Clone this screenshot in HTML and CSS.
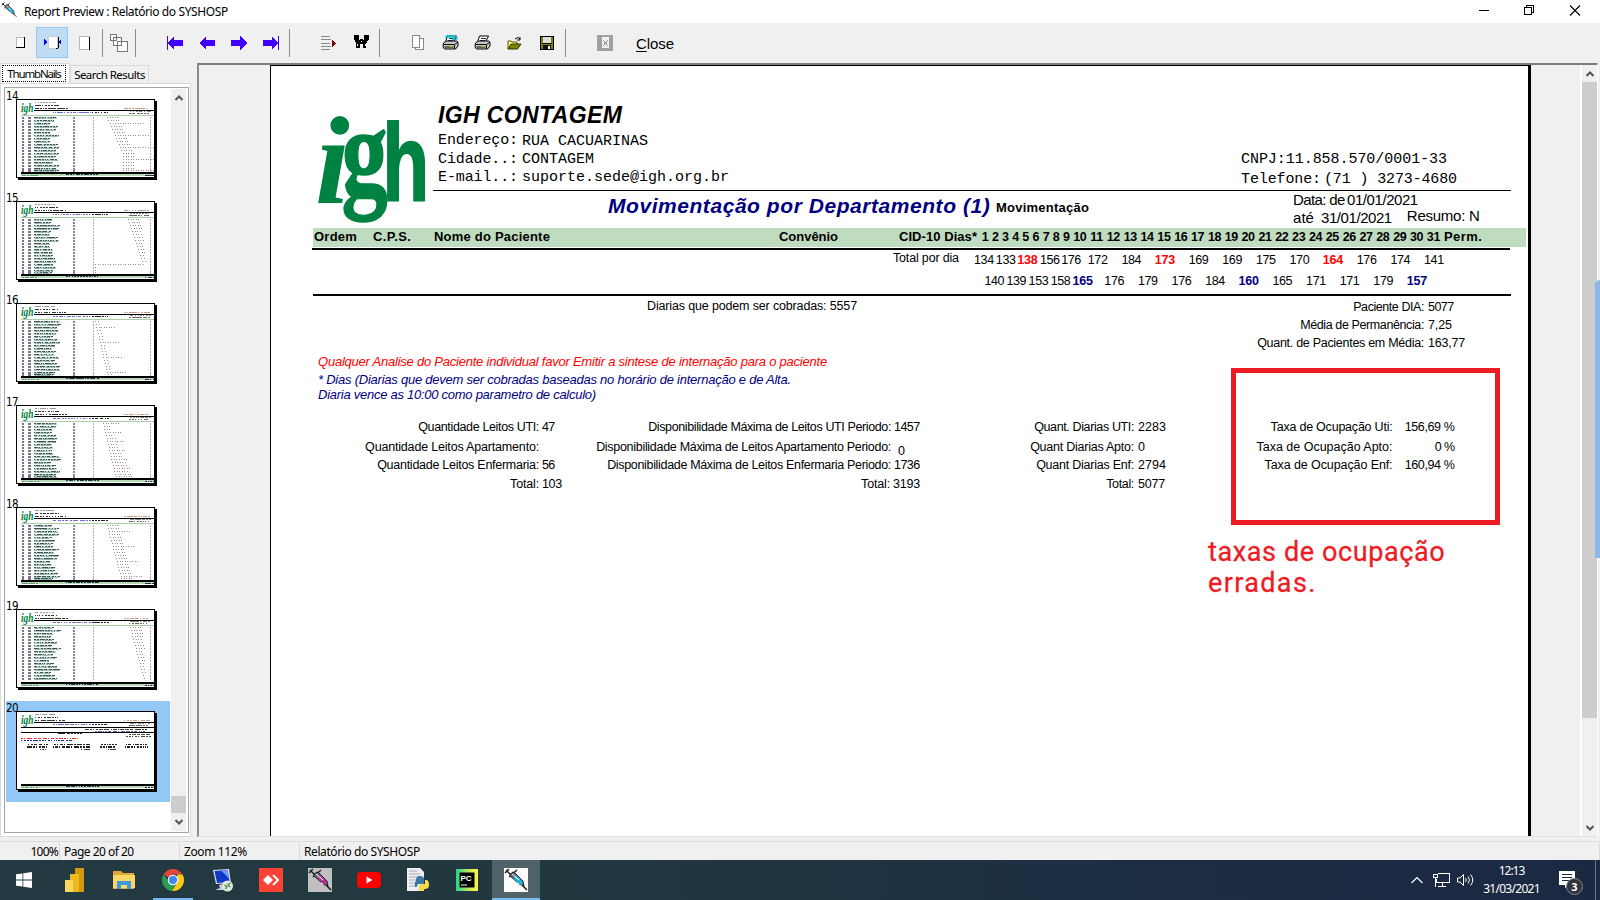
FILE: index.html
```html
<!DOCTYPE html>
<html lang="pt-BR">
<head>
<meta charset="utf-8">
<title>Report Preview : Relatório do SYSHOSP</title>
<link rel="stylesheet" href="styles.css">
</head>
<body>
<svg class="defs" width="0" height="0">
  <symbol id="syringe" viewBox="0 0 24 24">
    <path d="M2 2l5 5M1 5l4-4M5 9l8-7M8 4l4 3" stroke="#222" stroke-width="1.5" fill="none"/>
    <path d="M6 6l4-2 9 9 1 5-5-2-9-8z" fill="#667" stroke="#111" stroke-width=".8"/>
    <path class="fluid" d="M10 9l3-1 5 5 1 4-4-1-5-5z"/>
    <path d="M8 6l7 6M13 15l2 1" stroke="#fff" stroke-width="1"/>
    <path d="M18 17l5 5" stroke="#111" stroke-width="1.4"/>
  </symbol>
  <symbol id="printer" viewBox="0 0 16 16">
    <path d="M5 1h9l-3 6H3z" fill="#fff" stroke="#000"/>
    <path d="M6.500 3.500h5M5.500 5.500h5" stroke="#000" stroke-width=".8"/>
    <path d="M1 8l3-2h10l1.500 1v4L13 14H2l-1.500-2z" fill="#c8c8c8" stroke="#000"/>
    <path d="M1 9.500h11l3-2M12 10v4M2 12h9" stroke="#000" fill="none"/>
    <path d="M7 11h3" stroke="#e6d800" stroke-width="1.500"/>
  </symbol>
</svg>

<header class="titlebar">
  <svg class="app-icon syr-cyan" width="16" height="16"><use href="#syringe"/></svg>
  <span class="caption" data-w="204">Report Preview : Relatório do SYSHOSP</span>
  <svg class="winctl" width="102" height="12" viewBox="0 0 102 12" fill="none" stroke="#000" shape-rendering="crispEdges">
    <path d="M0 5.500h10M45.500 2.500h7v7h-7zM47.500 2v-1.500h7v7h-2"/>
    <path d="M91 .5l10 10M101 .5l-10 10" shape-rendering="auto" stroke-width="1.100"/>
  </svg>
</header>

<nav class="toolbar">
  <span class="btn"><svg width="18" height="18" shape-rendering="crispEdges"><path d="M5 3h8v10h-8z" fill="#fff" stroke="#bbb"/><path d="M5 13.500h9M13.500 3v11" stroke="#000" fill="none"/></svg></span>
  <span class="btn on"><svg width="18" height="18" shape-rendering="crispEdges"><path d="M5 2h9v12h-9z" fill="#fff" stroke="#ccc"/><path d="M13 14.500h2M15.500 3v11" stroke="#000"/><path d="M1 5v6l3-3zM18 5v6l-3-3z" fill="#00f"/></svg></span>
  <span class="btn"><svg width="18" height="18" shape-rendering="crispEdges"><path d="M4 2.500h10v13h-10z" fill="#fff" stroke="#bbb"/><path d="M14.500 3v13" stroke="#000"/></svg></span>
  <i class="sep s1"></i>
  <span class="btn"><svg width="18" height="19" shape-rendering="crispEdges" fill="#fff" stroke="#777"><path d="M.5 1.500h6v6h-6zM3.500 4.500h8v8h-8zM7.500 8.500h10v10h-10z"/></svg></span>
  <i class="sep s2"></i>
  <span class="btn"><svg width="16" height="14" fill="#4000ff" shape-rendering="crispEdges"><path d="M0 0h1v14h-1zM1 7l6-7v4h9v6h-9v4z"/></svg></span>
  <span class="btn"><svg width="16" height="14" fill="#4000ff" shape-rendering="crispEdges"><path d="M0 7l7-7v4h9v6h-9v4z"/></svg></span>
  <span class="btn"><svg width="16" height="14" fill="#4000ff" shape-rendering="crispEdges"><path d="M16 7l-7-7v4h-9v6h9v4z"/></svg></span>
  <span class="btn"><svg width="16" height="14" fill="#4000ff" shape-rendering="crispEdges"><path d="M15 0h1v14h-1zM15 7l-6-7v4h-9v6h9v4z"/></svg></span>
  <i class="sep s3"></i>
  <span class="btn"><svg width="16" height="14" shape-rendering="crispEdges"><path d="M0 .5h9M0 3.500h10M0 7.500h9M0 10.500h10M0 13.500h9" stroke="#888"/><path d="M11 4v7l4-3.500z" fill="#800000"/></svg></span>
  <span class="btn bin"><svg width="15" height="14" shape-rendering="crispEdges"><path d="M0 0h5v5h1V4h3v1h1V0h5v5h-1l-2 4v4H9V9H6v4H2V9L1 5H0z"/><path d="M7 6h1v1H7zM3 9h1v2H3zM11 9h1v2h-1z" fill="#fff"/></svg></span>
  <i class="sep s4"></i>
  <span class="btn"><svg width="13" height="16" shape-rendering="crispEdges" fill="#fff" stroke="#888"><path d="M3.500 3.500h8v11h-8z"/><path d="M.5.500h7v12h-7z"/></svg></span>
  <span class="btn"><svg width="17" height="16"><use href="#printer"/><path d="M3 2h10l-3 3M13 5l3-2M4 0h9" stroke="#00c8d0" stroke-width="1.500" fill="none"/></svg></span>
  <span class="btn"><svg width="17" height="16"><use href="#printer"/></svg></span>
  <span class="btn"><svg width="15" height="14"><path d="M1 13V5h3l1 1h5v2" fill="#ffff80" stroke="#555500"/><path d="M1 13l3-5h10l-3.500 5z" fill="#808000" stroke="#333300"/><path d="M8 3q3-3 5 0M13 1v3h-3" stroke="#000" fill="none"/></svg></span>
  <span class="btn save"><svg width="14" height="14" shape-rendering="crispEdges"><path d="M.5.500h13v13H.5z" fill="#808000" stroke="#000"/><path d="M3 1h8v6H3z" fill="#ddd"/><path d="M3 9h8v4H3zM2 7h10v1H2z" fill="#111"/><path d="M8 10h2v3H8z" fill="#fff"/></svg></span>
  <i class="sep s5"></i>
  <span class="btn"><svg width="16" height="16" shape-rendering="crispEdges"><path d="M0 0h16v16H0z" fill="#a0a0a0"/><path d="M5 2h7v11H5z" fill="#f0f0f0"/><path d="M6 5l5 6M11 5l-5 6" stroke="#a0a0a0"/></svg></span>
  <span class="close" data-w="38"><u>C</u>lose</span>
</nav>

<main class="workspace">
  <aside class="side">
    <div class="tabs">
      <div class="tab active"><span data-w="54">ThumbNails</span></div>
      <div class="tab"><span data-w="71">Search Results</span></div>
    </div>
    <div class="tabpage">
      <div class="listbox">
        <div class="thumbs" id="thumbs"></div>
        <div class="vscroll">
          <svg width="8" height="6"><path d="M.5 5L4 1.500 7.500 5" /></svg>
          <i class="knob"></i>
          <svg width="8" height="6"><path d="M.5 1L4 4.500 7.500 1" /></svg>
        </div>
      </div>
    </div>
  </aside>

  <section class="viewport">
    <article class="page">
      <div class="masthead">
        <svg class="logo" width="120" height="162" fill="#008242">
          <text class="lg-serif-i" transform="translate(2 137)">i</text>
          <text class="lg-serif" transform="translate(28.500 127.500) scale(.74 1)">g</text>
          <text class="lg-sans" transform="translate(69.500 133.500) scale(.7 1)">h</text>
        </svg>
        <div class="mast-text">
          <div class="org">
            <div class="org-left">
              <h1><span data-w="184">IGH CONTAGEM</span></h1>
              <p><span data-w="80" class="k">Endereço:</span><span data-w="126" class="dn">RUA CACUARINAS</span></p>
              <p><span data-w="80" class="k">Cidade..:</span><span data-w="72" class="dn">CONTAGEM</span></p>
              <p><span data-w="80" class="k">E-mail..:</span><span data-w="207">suporte.sede@igh.org.br</span></p>
            </div>
            <div class="org-right">
              <p><span data-w="206">CNPJ:11.858.570/0001-33</span></p>
              <p><span data-w="80" class="tel">Telefone:</span><span data-w="133">(71 ) 3273-4680</span></p>
            </div>
          </div>
          <div class="titles">
            <h2><span data-w="382">Movimentação por Departamento (1)</span></h2>
            <h3><span data-w="93">Movimentação</span></h3>
            <div class="period">
              <p><span data-w="52" class="de">Data: de</span><span data-w="71">01/01/2021</span></p>
              <p><span data-w="21" class="ate">até</span><span data-w="71">31/01/2021</span><span data-w="73" class="resumo">Resumo: N</span></p>
            </div>
          </div>
        </div>
      </div>
      <div class="band">
        <div class="b-ordem"><span data-w="43">Ordem</span></div>
        <div class="b-cps up"><span data-w="38">C.P.S.</span></div>
        <div class="b-nome up"><span data-w="116">Nome do Paciente</span></div>
        <div class="b-conv up"><span data-w="59">Convênio</span></div>
        <div class="b-cid"><span data-w="78">CID-10 Dias*</span></div>
        <div class="days up" id="days"></div>
        <div class="b-perm"><span data-w="38">Perm.</span></div>
      </div>
      <hr class="rule">
      <div class="totals">
        <span class="t-label" data-w="66">Total por dia</span>
        <div class="t-rows">
          <div class="t-row r1" id="odd"></div>
          <div class="t-row r2" id="even"></div>
        </div>
      </div>
      <hr class="rule second">
      <div class="summary">
        <span class="charged" data-w="210">Diarias que podem ser cobradas: 5557</span>
        <dl>
          <dt data-w="71">Paciente DIA:</dt><dd data-w="26">5077</dd>
          <dt data-w="124">Média de Permanência:</dt><dd data-w="24">7,25</dd>
          <dt data-w="167">Quant. de Pacientes em Média:</dt><dd data-w="37">163,77</dd>
        </dl>
      </div>
      <div class="notes">
        <p class="warn"><span data-w="509">Qualquer Analise do Paciente individual favor Emitir a sintese de internação para o paciente</span></p>
        <p><span data-w="473">* Dias (Diarias que devem ser cobradas baseadas no horário de internação e de Alta.</span></p>
        <p class="last"><span data-w="278">Diaria vence as 10:00 como parametro de calculo)</span></p>
      </div>
      <div class="stats">
        <dl class="c1">
          <dt data-w="121">Quantidade Leitos UTI:</dt><dd data-w="13">47</dd>
          <dt data-w="174">Quantidade Leitos Apartamento:</dt><dd></dd>
          <dt data-w="162">Quantidade Leitos Enfermaria:</dt><dd data-w="13">56</dd>
          <dt data-w="29">Total:</dt><dd data-w="20">103</dd>
        </dl>
        <dl class="c2">
          <dt data-w="243">Disponibilidade Máxima de Leitos UTI Periodo:</dt><dd data-w="26">1457</dd>
          <dt data-w="295">Disponibilidade Máxima de Leitos Apartamento Periodo:</dt><dd class="low">0</dd>
          <dt data-w="284">Disponibilidade Máxima de Leitos Enfermaria Periodo:</dt><dd data-w="26">1736</dd>
          <dt data-w="29" class="nudge">Total:</dt><dd data-w="27" class="nudge">3193</dd>
        </dl>
        <dl class="c3">
          <dt data-w="100">Quant. Diarias UTI:</dt><dd data-w="28">2283</dd>
          <dt data-w="104">Quant Diarias Apto:</dt><dd>0</dd>
          <dt data-w="98">Quant Diarias Enf:</dt><dd data-w="28">2794</dd>
          <dt data-w="28">Total:</dt><dd data-w="27">5077</dd>
        </dl>
        <dl class="c4">
          <dt data-w="122">Taxa de Ocupação Uti:</dt><dd data-w="50">156,69 %</dd>
          <dt data-w="136">Taxa de Ocupação Apto:</dt><dd data-w="20">0 %</dd>
          <dt data-w="128">Taxa de Ocupação Enf:</dt><dd data-w="50">160,94 %</dd>
        </dl>
      </div>
      <div class="mark-box"></div>
      <div class="mark-text"><span data-w="237">taxas de ocupação</span><br><span data-w="108">erradas.</span></div>
    </article>
    <div class="vscroll main-scroll">
      <svg width="8" height="6"><path d="M.5 5L4 1.500 7.500 5" /></svg>
      <i class="knob"></i>
      <svg width="8" height="6"><path d="M.5 1L4 4.500 7.500 1" /></svg>
    </div>
  </section>
  <i class="edge-bar"></i>
</main>

<footer class="status">
  <div class="st-zoom"><span data-w="28">100%</span></div>
  <div class="st-page"><span data-w="70">Page 20 of 20</span></div>
  <div class="st-pct"><span data-w="63">Zoom 112%</span></div>
  <div class="st-name"><span data-w="116">Relatório do SYSHOSP</span></div>
</footer>

<div class="taskbar">
  <span class="app"><svg width="16" height="16" fill="#fff"><path d="M0 2.300l6.500-.9v6.200H0zM7.300 1.300L16 0v7.600H7.300zM0 8.400h6.500v6.200L0 13.700zM7.300 8.400H16V16l-8.700-1.200z"/></svg></span>
  <span class="app pbi"><svg width="20" height="24"><path d="M10 0h9v24h-9z" fill="#d29a0c"/><path d="M5 6h9v18H5z" fill="#edb91f"/><path d="M0 12h8v12H0z" fill="#f9d85e"/></svg></span>
  <span class="app"><svg width="22" height="20"><path d="M0 1h8l2 2h11v16H0z" fill="#e5a63a"/><path d="M0 5h22v13H0z" fill="#fcd667"/><path d="M4 19v-8h14v8h-4v-4H8v4z" fill="#3f97dc"/></svg></span>
  <span class="app run"><svg width="24" height="24" viewBox="0 0 24 24"><path d="M12 12L2.500 6.500A11 11 0 0 1 21.500 6.500H12z" fill="#e2463a"/><path d="M2.500 6.500A11 11 0 0 0 11 23l5-9-4-2-4 2z" fill="#2d9d50"/><path d="M21.500 6.500A11 11 0 0 1 11 23l5.500-9-.5-7.500z" fill="#fbc916"/><circle cx="12" cy="12" r="5.300" fill="#fff"/><circle cx="12" cy="12" r="4.200" fill="#4486f4"/></svg></span>
  <span class="app"><svg width="24" height="24"><path d="M3 2l16-1 2 14-15 1z" fill="#dde"/><path d="M4.500 3l13-1 2 12-12.500 1z" fill="#1038c8"/><path d="M11 2.500l6.500-.5 2 9z" fill="#6b9bf0"/><path d="M9 17l5-1 1 4 2 2H5l5-2z" fill="#ccd"/><circle cx="17.500" cy="18" r="5.500" fill="#e0e6e0"/><path d="M14.500 17l2.500 1.500-1.500 2.500M20.500 15l-2.500 1.500 2 2.500" stroke="#388a3d" stroke-width="1.300" fill="none"/></svg></span>
  <span class="app"><svg width="24" height="24"><path d="M0 0h24v24H0z" fill="#fb4034"/><path d="M4 12l5-5 5 5-5 5z" fill="#fff"/><path d="M14 7l5 5-5 5" stroke="#fff" stroke-width="2" fill="none"/></svg></span>
  <span class="app"><svg class="syr-mag" width="24" height="24"><path d="M0 0h24v24H0z" fill="#c0c0c0"/><use href="#syringe"/></svg></span>
  <span class="app"><svg width="24" height="18"><rect y="1" width="24" height="16" rx="4" fill="#f00"/><path d="M9.500 5.500v7l6-3.500z" fill="#fff"/></svg></span>
  <span class="app"><svg width="24" height="24"><path d="M1 0h13l4 4v19H1z" fill="#eee"/><path d="M3 3h8M3 6h11M3 9h11M3 12h8M3 15h5M3 18h6" stroke="#aab" stroke-width="1"/><path d="M10 12q0-4 4-4t4 3v5h-5q-2 0-2 3h-2q-1-5 1-6z" fill="#3b77a8"/><path d="M19 12h2q2 1 2 5t-4 4h-1v2h-5v-4q0-3 3-3h3z" fill="#fdd845"/></svg></span>
  <span class="app"><svg width="22" height="22"><defs><linearGradient id="pc" x1="0" y1="0" x2="1" y2="0"><stop offset="0" stop-color="#21d789"/><stop offset=".7" stop-color="#d8ee4c"/><stop offset="1" stop-color="#fcf84a"/></linearGradient></defs><path d="M0 0h22v22H0z" fill="url(#pc)"/><path d="M3.500 3.500h15v15h-15z"/><text class="pc" x="4.500" y="11.500" fill="#fff">PC</text><path d="M5 16h6" stroke="#fff"/></svg></span>
  <span class="app current"><svg class="syr-cyan" width="24" height="24"><path d="M0 0h24v24H0z" fill="#fff"/><use href="#syringe"/></svg></span>
  <div class="tray">
    <svg width="12" height="8"><path d="M.5 7L6 1.500 11.500 7" fill="none" stroke="#fff" stroke-width="1.200"/></svg>
    <svg class="net" width="17" height="14" fill="none" stroke="#fff" shape-rendering="crispEdges"><path d="M5 .5h11v9H3V6M9.500 10v3M5 13.500h8M.5 1.500h4v3h-4zM2.500 5v9"/></svg>
    <svg class="vol" width="17" height="14" fill="none" stroke="#fff"><path d="M.5 5h2.500l3.500-3.500v11L3 9H.5zM8.500 5q1.500 2 0 4M11 3.500q3 3.500 0 7M13.500 1.500q4.500 5.500 0 11"/></svg>
    <div class="clock"><span data-w="26">12:13</span><span data-w="57">31/03/2021</span></div>
    <svg class="note" width="25" height="25"><path d="M0 0h16v14h-7l-3 3v-3H0z" fill="#fff"/><path d="M3 3.500h10M3 6.500h10M3 9.500h8" stroke="#1b2942"/><circle cx="15.500" cy="15.500" r="8" fill="#30343c" stroke="#888"/><text x="15.500" y="19.500" text-anchor="middle" fill="#fff">3</text></svg>
    <i class="peek"></i>
  </div>
</div>
<script src="app.js"></script>
</body>
</html>
```

FILE: styles.css
```css
* { box-sizing: border-box; }
body { margin: 0; width: 1600px; height: 900px; overflow: hidden; background: #f0f0f0; color: #000; font: 12px/16px "Noto Sans", "Open Sans", sans-serif; display: flex; flex-direction: column; }
h1, h2, h3, p, dl, dd, dt { margin: 0; font-weight: normal; }
span, dt, dd { white-space: nowrap; }
.defs { position: absolute; }
svg { display: block; flex: none; }
.syr-cyan .fluid, .syr-cyan { fill: #18b8d8; }
.syr-mag { fill: #b0309a; }

.titlebar { flex: none; height: 23px; background: #fff; display: flex; align-items: center; }
.app-icon { margin: -4px 7px 0 1px; }
.titlebar .caption { font-size: 12px; margin-top: 1px; }
.winctl { margin: -2px 19px 0 auto; }

.toolbar { flex: none; height: 40px; display: flex; align-items: flex-start; padding: 4px 0 0 4px; }
.btn { width: 32px; height: 31px; display: flex; align-items: center; justify-content: center; flex: none; }
.btn.on { background: #c0dcf3; border: 1px solid #90c8f6; }
.bin, .save { padding-left: 1px; }
.bin { margin-top: -1px; }
.sep { flex: none; width: 1px; height: 28px; background: #8c8c8c; margin-top: 2px; }
.s1 { margin-left: 2px; }
.s2 { margin-right: 23px; }
.s3 { margin-left: 2px; margin-right: 23px; }
.s4 { margin-left: 2px; margin-right: 22px; }
.s5 { margin-left: 3px; margin-right: 23px; }
.close { font: 15px/18px "Liberation Sans", Arial, sans-serif; margin: 8px 0 0 15px; }
.close u { text-underline-offset: 2px; }

.workspace { position: relative; flex: none; height: 775px; display: flex; }
.side { width: 191px; display: flex; flex-direction: column; height: 774px; }
.tabs { display: flex; align-items: flex-end; height: 20px; }
.tab { height: 18px; border: 1px solid #dadada; border-bottom: 0; width: 79px; display: flex; align-items: center; justify-content: center; font-size: 11.5px; }
.tab.active { background: #fff; width: 70px; height: 20px; padding: 0 3px 0 1px; }
.tab.active span { outline: 1px dotted #000; padding: 0 4px; line-height: 15px; margin-top: -1px; }
.tabpage { flex: 1; background: #fff; border: 1px solid #dadada; padding: 3px 1px 3px 3px; }
.listbox { border: 1px solid #a0a4ab; height: 100%; display: flex; padding: 1px 2px 1px 1px; background: #fff; }
.thumbs { width: 164px; }
.thumb { height: 102px; padding: 10px 0 0 10px; position: relative; }
.thumb.sel { background: #91c8f6; height: 101px; }
.thumb b { position: absolute; left: 0; top: -1px; font: 11.5px/16px "DejaVu Sans Condensed", "DejaVu Sans", sans-serif; letter-spacing: -.6px; }
.sheet { width: 139px; height: 79px; border: 1px solid #000; background: #fff; box-shadow: 2px 2px 0 #000; }
.sheet text { font: italic bold 13px "Liberation Serif", serif; }
.vscroll { width: 15px; margin-left: auto; background: #f0f0f0; display: flex; flex-direction: column; align-items: center; padding: 6px 0; }
.vscroll path { fill: none; stroke: #555; stroke-width: 2; }
.knob { width: 15px; height: 17px; background: #cdcdcd; margin: auto 0 6px; }

.viewport { margin-left: 6px; width: 1401px; height: 774px; border: 2px solid #8a8a8a; border-top-color: #7c7c7c; border-right: 1px solid #fff; border-bottom: 1px solid #e2e2e2; padding-left: 71px; display: flex; overflow: hidden; background: #f0f0f0; }
.main-scroll { width: 17px; border-left: 2px solid #fff; margin-right: 0; padding: 6px 0 5px; }
.main-scroll .knob { height: 636px; margin: 5px 0 auto; }
.edge-bar { position: absolute; left: 1595px; top: 217px; width: 5px; height: 278px; background: #8bb8ec; border-radius: 5px 0 0 0; }

.page { position: relative; width: 1261px; height: 900px; background: #fff; border: 1px solid #000; border-right-width: 3px; padding-left: 42px; font: 12.5px/18px "Liberation Sans", Arial, sans-serif; flex: none; }
.masthead { display: flex; height: 162px; }
.lg-serif-i { font: italic bold 125px "Liberation Serif", serif; }
.lg-serif { font: bold 125px "Liberation Serif", serif; stroke: #008242; stroke-width: 1.5px; }
.lg-sans { font: bold 109px "Liberation Sans", sans-serif; stroke: #008242; stroke-width: 2px; }
.mast-text { width: 1078px; }
.org { height: 125px; border-bottom: 1px solid #000; display: flex; font: 15px/18.5px "Liberation Mono", "Courier New", monospace; }
.org-left { width: 808px; padding: 37px 0 0 5px; }
.org p { display: flex; }
h1 { font: italic bold 23px/24px "Liberation Sans", Arial, sans-serif; margin-bottom: 5px; }
.k { width: 84px; }
.dn { padding-top: .6px; }
.org p { height: 18.5px; }
.org .org-right p { height: 19.5px; }
.org-right { padding-top: 84px; line-height: 19.5px; }
.tel { width: 83px; }
.titles { display: flex; height: 37px; align-items: flex-start; }
.titles h2 { font: italic bold 21px/24px "Liberation Sans", Arial, sans-serif; color: #000080; padding: 3px 0 0 175px; width: 563px; }
.titles h3 { font: bold 13px/18px "Liberation Sans", Arial, sans-serif; padding-top: 8px; width: 297px; }
.period { font-size: 15px; }
.period p { display: flex; height: 18px; }
.de { width: 54px; }
.ate { width: 28px; }
.resumo { margin: -2px 0 0 15px; }

.band { background: #c0dcc0; width: 1213px; height: 19px; display: flex; padding-left: 1px; font-weight: bold; font-size: 13px; line-height: 18px; }
.up { line-height: 17px; }
.b-ordem { width: 59px; }
.b-cps { width: 61px; }
.b-nome { width: 345px; }
.b-conv { width: 120px; }
.b-cid { width: 81px; }
.days { display: flex; width: 464px; font-size: 12.5px; line-height: 18px; }
.days span { flex: none; width: 16.85px; text-align: center; letter-spacing: -.4px; }
.days .one { width: 10.15px; }
.rule { height: 2px; background: #000; border: 0; margin: 1px 0 0 -1px; width: 1198px; }
.rule.second { margin: 0; }
.totals { display: flex; height: 44px; padding-left: 580px; }
.t-label { line-height: 16px; width: 80px; }
.t-rows { padding-top: 2px; line-height: 16px; }
.t-row { display: flex; height: 20.7px; }
.t-row span { flex: none; width: 33.63px; text-align: center; letter-spacing: -.4px; }
.t-row b { letter-spacing: -.2px; }
.r1 span:nth-child(-n+5) { width: 21.8px; }
.r1 span:nth-child(4) { padding-left: 1px; }
.r1 span:nth-child(6) { margin-left: -1.2px; }
.r2 { padding-left: 10.2px; }
.r2 span:nth-child(-n+5) { width: 22.1px; }
.r2 span:nth-child(6) { margin-left: 3.7px; }
.red { color: #f00; }
.blue { color: #000080; }

.summary { display: flex; height: 58px; padding: 1px 0 0 334px; }
.summary dl { margin-left: auto; margin-right: 27px; width: 330px; display: grid; grid-template-columns: 253px 1fr; column-gap: 4px; grid-auto-rows: 18px; padding-top: 1px; }
.charged { width: 211px; }
dt { justify-self: end; }
dd { justify-self: start; }
.notes { font-style: italic; font-size: 13px; line-height: 15px; color: #000080; padding-left: 5px; height: 64px; }
.warn { color: #f00; margin-bottom: 3px; }
.stats { display: flex; }
.stats dl { display: grid; column-gap: 3px; grid-template-rows: 20px 18px 19px 18px; }
.stats .c1 { width: 278px; grid-template-columns: 226px 1fr; }
.stats .c2 { width: 434px; grid-template-columns: 300px 1fr; }
.stats .c3 { width: 206px; grid-template-columns: 109px 1fr; column-gap: 4px; }
.stats .c4 { width: 223.5px; grid-template-columns: 161.5px 1fr; column-gap: 0; }
.c4 dd { justify-self: end; }
.low { padding: 4px 0 0 4px; }
.nudge { margin: 0 1px 0 -1px; }
.mark-box { position: absolute; left: 960px; top: 302px; width: 269px; height: 157px; border: 5px solid #ed1c24; }
.mark-text { position: absolute; left: 937px; top: 471px; font: 27px/31px Roboto, sans-serif; color: #ed1c24; -webkit-text-stroke: .3px #ed1c24; }

.status { position: relative; flex: none; height: 19px; margin-top: 3px; padding-top: 1px; border-top: 1px solid #dadada; display: flex; background: #f0f0f0; line-height: 17px; }
.status div { border-right: 1px solid #dadada; height: 17px; }
.st-zoom { width: 60px; text-align: right; padding-right: 1px; }
.st-page { width: 120px; padding-left: 4px; }
.st-pct { width: 120px; padding-left: 4px; }
.st-name { width: 1300px; padding-left: 4px; }
.status span, .clock span, .tab span { display: inline-block; }

.taskbar { flex: none; height: 40px; display: flex; background: linear-gradient(90deg, #233a42 0, #22383f 35%, #1c2e43 70%, #1b2842 100%); }
.app { width: 49px; height: 40px; display: flex; align-items: center; justify-content: center; flex: none; }
.app:first-child { width: 48px; margin-right: 2px; }
.run { border-bottom: 2px solid #76b9ed; width: 40px; margin: 0 4px 0 5px; padding-top: 2px; }
.current { background: #4f6269; border-bottom: 2px solid #76b9ed; margin-left: 1px; padding-top: 2px; width: 48px; }
.pc { font: bold 8px "Liberation Sans", sans-serif; }
.tray { margin-left: auto; display: flex; align-items: center; color: #fff; height: 40px; }
.net { margin-left: 10px; }
.vol { margin-left: 7px; }
.clock { width: 75px; height: 40px; display: flex; flex-direction: column; align-items: center; line-height: 18px; padding-top: 2px; }
.note { margin: 6px 11px 0 10px; }
.note text { font: bold 11px "Noto Sans", sans-serif; }
.peek { width: 1px; height: 40px; background: #6b7688; margin-right: 4px; }
```

FILE: app.js
```js
// Day columns and daily totals
const days = document.getElementById('days');
for (let d = 1; d <= 31; d++) {
  const s = document.createElement('span');
  s.textContent = d;
  if (d < 10) s.className = 'one';
  days.append(s);
}
const totals = {
  odd: ['134', '133', '138r', '156', '176', '172', '184', '173r', '169', '169', '175', '170', '164r', '176', '174', '141'],
  even: ['140', '139', '153', '158', '165b', '176', '179', '176', '184', '160b', '165', '171', '171', '179', '157b']
};
for (const id in totals) {
  for (const t of totals[id]) {
    const s = document.createElement('span');
    const flag = t[3];
    s.innerHTML = flag ? `<b class="${flag === 'r' ? 'red' : 'blue'}">${t.slice(0, 3)}</b>` : t;
    document.getElementById(id).append(s);
  }
}

// Miniature report pages
let seed = 7;
const rnd = () => (seed = (seed * 16807) % 2147483647) / 2147483647;
const r = (x, y, w, h, c) => `<rect x="${x}" y="${y}" width="${w}" height="${h}" fill="${c}"/>`;
const dash = (x, y, w, c, h = 1) => {
  let o = '';
  for (let i = x; i < x + w; i += 2 + Math.floor(rnd() * 2)) o += r(i, y, 1 + (rnd() > .3 ? 1 : 0), h, c);
  return o;
};
// [first dot column, number of dots] by row for each sheet
const shapes = {
  14: i => [90 + Math.min(i * 1.3, 16), i % 4 === 2 ? 14 : 5],
  15: i => i === 15 ? [78, 20] : i > 15 ? [78, 1] : [111 + Math.min(i, 15), 5 - i / 4],
  16: i => [78 + i * .7, i % 5 === 2 ? 8 : 2],
  17: i => [86 + i * .7, i % 3 ? 2 + i / 4 : 7],
  18: i => [90 + i * .8, i % 5 === 2 ? 9 : 5],
  19: i => [113 + i * .8, 5 - i / 4]
};
let html = '';
for (let n = 14; n <= 20; n++) {
  let g = `<text x="4" y="12" fill="#008242" textLength="12.5" lengthAdjust="spacingAndGlyphs">igh</text>`;
  g += dash(18, 2, 20, '#999') + dash(18, 5, 24, '#333') + dash(18, 8, 32, '#333');
  g += r(17, 10, 120, 1, '#000') + dash(107, 8, 25, '#c98') + dash(36, 12, 38, '#7070c8') + dash(75, 12, 16, '#222') + r(110, 11, 22, 3, '#fff') + dash(113, 11, 20, '#888') + dash(112, 13, 20, '#666');
  if (n < 20) {
    g += r(4, 15, 133, 1, '#a9cfa9');
    for (let i = 0; i < (n === 19 ? 18 : 19); i++) {
      const y = 17 + i * 3 - (i > 17 ? 1 : 0);
      g += r(5, y, 2, 2, '#767690') + r(11, y, 3, 2, '#7b7688') + r(56, y, 2, 2, '#8888a0') + r(76, y, 1, 2, '#caa') + r(133, y, 1, 2, '#c8a0b8');
      const w = 15 + rnd() * 11;
      g += r(17, y, Math.round(w), 2, '#bcd6d2') + dash(17, y, w, '#4a5250') + dash(18, y + 1, w - 2, '#8cb4ae');
      const [x, c] = shapes[n](i);
      for (let k = 0; k < c; k++) g += r(Math.round(x) + k * 2.500, y, 1, 1, k % 3 ? '#b88' : '#88a');
    }
  } else {
    g += r(4, 15, 133, 1, '#000') + r(4, 20, 133, 1, '#000') + dash(68, 17, 62, '#433') + dash(78, 19, 50, '#669') + dash(41, 21, 23, '#222');
    g += dash(112, 22, 20, '#555') + dash(109, 24, 24, '#444') + dash(4, 26, 57, '#e33') + dash(4, 28, 53, '#2222a0');
    for (const [x, w] of [[11, 20], [37, 35], [84, 15], [109, 22]]) g += dash(x, 32, w, '#222') + dash(x - 1, 34, w + 1, '#222', 2) + (x < 109 ? dash(x + w - 8, 37, 8, '#444') : '');
  }
  g += r(4, 72, 133, 2, '#000') + r(4, 74, 133, 2, '#b8d8b8') + dash(49, 74, 33, '#234') + dash(5, 75, 16, '#697') + dash(128, 75, 9, '#234');
  html += `<div class="thumb${n === 20 ? ' sel' : ''}"><b>${n}</b><div class="sheet"><svg width="137" height="77" shape-rendering="crispEdges">${g}</svg></div></div>`;
}
document.getElementById('thumbs').innerHTML = html;

// Tracks each label to its printed width
document.querySelectorAll('[data-w]').forEach(el => {
  const range = document.createRange();
  range.selectNodeContents(el);
  const natural = range.getBoundingClientRect().width;
  el.style.letterSpacing = ((+el.dataset.w - natural) / (el.textContent.length - .5)).toFixed(3) + 'px';
});
```
